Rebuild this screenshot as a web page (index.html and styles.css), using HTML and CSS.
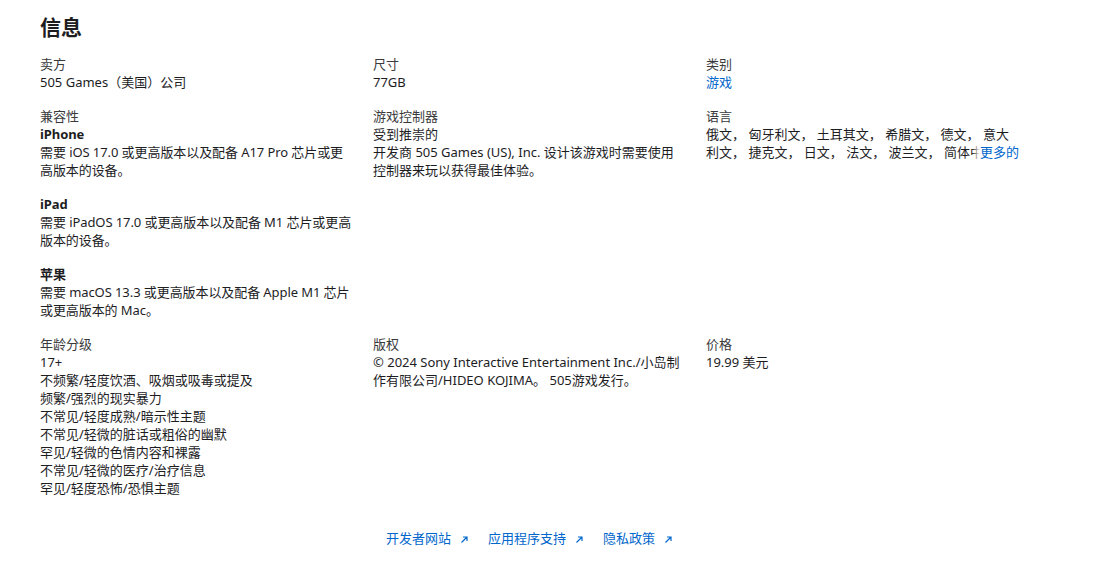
FILE: index.html
```html
<!DOCTYPE html>
<html lang="zh-CN">
<head>
<meta charset="utf-8">
<title>信息</title>
<link rel="stylesheet" href="styles.css">
</head>
<body>
<section class="info">
  <h2 class="title">信息</h2>
  <dl class="grid">
    <div class="item">
      <dt class="label">卖方</dt>
      <dd class="value">505 Games（美国）公司</dd>
    </div>
    <div class="item">
      <dt class="label">尺寸</dt>
      <dd class="value">77GB</dd>
    </div>
    <div class="item">
      <dt class="label">类别</dt>
      <dd class="value"><a class="link" href="#">游戏</a></dd>
    </div>

    <div class="item">
      <dt class="label">兼容性</dt>
      <dd class="value compat">
        <div class="block">
          <div class="device">iPhone</div>
          <div>需要 iOS 17.0 或更高版本以及配备 A17 Pro 芯片或更高版本的设备。</div>
        </div>
        <div class="block">
          <div class="device">iPad</div>
          <div>需要 iPadOS 17.0 或更高版本以及配备 M1 芯片或更高版本的设备。</div>
        </div>
        <div class="block">
          <div class="device">苹果</div>
          <div>需要 macOS 13.3 或更高版本以及配备 Apple M1 芯片或更高版本的 Mac。</div>
        </div>
      </dd>
    </div>
    <div class="item">
      <dt class="label">游戏控制器</dt>
      <dd class="value">
        <div>受到推崇的</div>
        <div>开发商 505 Games (US), Inc. 设计该游戏时需要使用控制器来玩以获得最佳体验。</div>
      </dd>
    </div>
    <div class="item">
      <dt class="label">语言</dt>
      <dd class="value lang">
        <p class="clamp">俄文， 匈牙利文， 土耳其文， 希腊文， 德文， 意大利文， 捷克文， 日文， 法文， 波兰文， 简体中文， 繁体中文， 英语， 葡萄牙文， 西班牙文， 阿拉伯文， 韩文</p>
        <a class="more" href="#">更多的</a>
      </dd>
    </div>

    <div class="item">
      <dt class="label">年龄分级</dt>
      <dd class="value">
        <div>17+</div>
        <div>不频繁/轻度饮酒、吸烟或吸毒或提及</div>
        <div>频繁/强烈的现实暴力</div>
        <div>不常见/轻度成熟/暗示性主题</div>
        <div>不常见/轻微的脏话或粗俗的幽默</div>
        <div>罕见/轻微的色情内容和裸露</div>
        <div>不常见/轻微的医疗/治疗信息</div>
        <div>罕见/轻度恐怖/恐惧主题</div>
      </dd>
    </div>
    <div class="item">
      <dt class="label">版权</dt>
      <dd class="value">© 2024 Sony Interactive Entertainment Inc./小岛制作有限公司/HIDEO KOJIMA。 505游戏发行。</dd>
    </div>
    <div class="item">
      <dt class="label">价格</dt>
      <dd class="value">19.99 美元</dd>
    </div>
  </dl>

  <ul class="links">
    <li><a class="ext" href="#">开发者网站<svg class="arrow" width="9" height="9" viewBox="0 0 9 9"><path d="M1.5 7.5 L7 2 M3 2 H7 V6" fill="none" stroke="currentColor" stroke-width="1.2"/></svg></a></li>
    <li><a class="ext" href="#">应用程序支持<svg class="arrow" width="9" height="9" viewBox="0 0 9 9"><path d="M1.5 7.5 L7 2 M3 2 H7 V6" fill="none" stroke="currentColor" stroke-width="1.2"/></svg></a></li>
    <li><a class="ext" href="#">隐私政策<svg class="arrow" width="9" height="9" viewBox="0 0 9 9"><path d="M1.5 7.5 L7 2 M3 2 H7 V6" fill="none" stroke="currentColor" stroke-width="1.2"/></svg></a></li>
  </ul>
</section>
</body>
</html>
```

FILE: styles.css
```css
html, body {
  margin: 0;
  padding: 0;
  background: #ffffff;
}

body {
  font-family: "Noto Sans", "Noto Sans CJK SC", sans-serif;
  font-size: 13px;
  line-height: 18px;
  color: #1d1d1f;
}

.info {
  width: 979px;
  margin-left: 40px;
  padding-top: 14px;
}

.title {
  margin: 0 0 15px 0;
  font-size: 21px;
  line-height: 26px;
  font-weight: 700;
  color: #1d1d1f;
}

.grid {
  margin: 0;
  display: grid;
  grid-template-columns: repeat(3, 313px);
  column-gap: 20px;
  row-gap: 16px;
}

.item {
  min-width: 0;
}

.label {
  color: #3a3a3c;
  margin: 0;
}

.value {
  margin: 0;
}

.compat {
  letter-spacing: -0.08px;
}

.block + .block {
  margin-top: 16px;
}

.device {
  font-weight: 700;
}

.link {
  color: #0066cc;
  text-decoration: none;
}

.lang {
  position: relative;
}

.clamp {
  margin: 0;
  display: -webkit-box;
  -webkit-line-clamp: 2;
  -webkit-box-orient: vertical;
  overflow: hidden;
}

.more {
  position: absolute;
  right: 0;
  bottom: 0;
  padding-left: 8px;
  color: #0066cc;
  text-decoration: none;
  background: linear-gradient(to right, rgba(255,255,255,0) 0, #ffffff 8px);
}

.links {
  list-style: none;
  margin: 32px 0 0 0;
  padding: 0;
  display: flex;
  justify-content: center;
  gap: 19px;
}

.ext {
  color: #0066cc;
  text-decoration: none;
  display: inline-flex;
  align-items: center;
}

.arrow {
  margin-left: 9px;
  margin-top: 3px;
}
```
